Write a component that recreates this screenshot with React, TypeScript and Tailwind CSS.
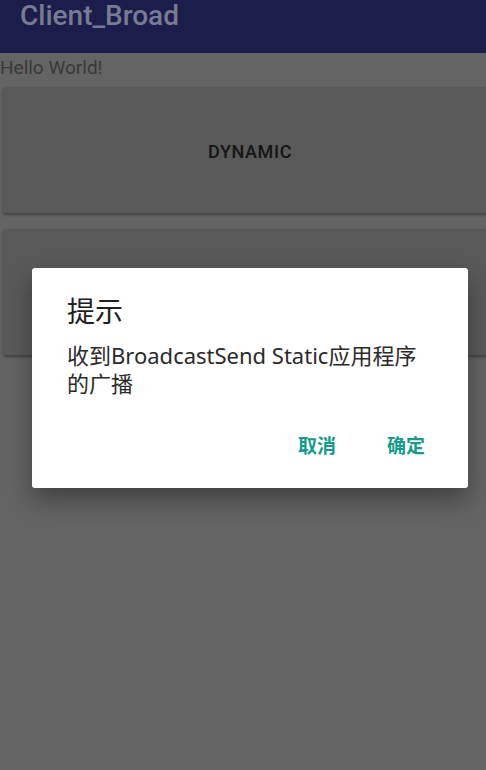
import React from "react";

const cjk = { fontFamily: 'Roboto, "Noto Sans CJK SC", sans-serif' };
const body = { fontFamily: '"Noto Sans", "Noto Sans CJK SC", sans-serif' };

function DimButton({ label }: { label?: string }) {
  return (
    <div className="ml-[3px] w-[494px] shrink-0 h-[126px] bg-[#595959] shadow-[0_2px_3px_rgba(0,0,0,0.35)] rounded-[2px] flex items-center justify-center">
      {label && (
        <span className="text-[18px] font-medium text-[#151515] tracking-[0.6px] mt-[3px]">
          {label}
        </span>
      )}
    </div>
  );
}

export default function App() {
  return (
    <div
      className="relative w-[486px] h-[770px] overflow-hidden bg-[#646464]"
      style={cjk}
    >
      <div className="h-[53px] bg-[#1b1e4b] px-[20px] flex items-start">
        <span className="text-[28px] font-medium text-[#787c92] leading-[32px]">
          Client_Broad
        </span>
      </div>
      <div className="text-[19px] text-[#393939] leading-[28px] mt-[1px]">
        Hello World!
      </div>
      <div className="flex flex-col gap-[16px] mt-[5px]">
        <DimButton label="DYNAMIC" />
        <DimButton />
      </div>

      {/* dialog */}
      <div className="absolute left-[32px] top-[268px] w-[436px] h-[220px] bg-white rounded-[3px] shadow-[0_12px_24px_rgba(0,0,0,0.35)] px-[35px] pt-[27px]">
        <div className="text-[28px] text-[#202020] leading-[36px]">提示</div>
        <div
          className="mt-[10px] w-[366px] text-[22px] text-[#2a2a2a] leading-[28px]"
          style={body}
        >
          收到BroadcastSend Static应用程序的广播
        </div>
        <div className="flex justify-end gap-[51px] mt-[36px] pr-[8px]">
          <span className="text-[19px] font-bold text-[#159a8b]">取消</span>
          <span className="text-[19px] font-bold text-[#159a8b]">确定</span>
        </div>
      </div>
    </div>
  );
}
